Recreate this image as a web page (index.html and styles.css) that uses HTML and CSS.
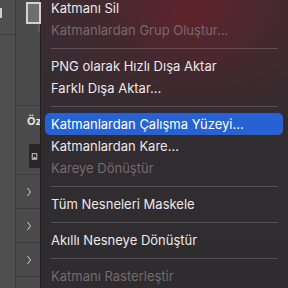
FILE: index.html
```html
<!DOCTYPE html>
<html lang="tr">
<head>
<meta charset="utf-8">
<title>Katman menüsü</title>
<link rel="stylesheet" href="styles.css">
</head>
<body>
<div class="screen">
  <aside class="col1">
    <div class="c1-top"><span class="tab-mark"></span></div>
  </aside>
  <aside class="col2">
    <div class="thumb-area"><span class="thumb"></span><span class="thumb-edge"></span></div>
    <div class="props-head">Öz</div>
    <div class="icon-row">
      <span class="img-icon">
        <svg width="12" height="14" viewBox="0 0 12 14"><rect x="3.5" y="4.5" width="5" height="6" fill="none" stroke="#d8d8d8" stroke-width="1"/><path d="M4 10 L6 7.5 L8 10 Z" fill="#d8d8d8"/></svg>
      </span>
    </div>
    <div class="row"><svg class="chev" width="6" height="10" viewBox="0 0 6 10"><polyline points="1.5,1 4.5,5 1.5,9" fill="none" stroke="#cfcfcf" stroke-width="1"/></svg></div>
    <div class="row"><svg class="chev" width="6" height="10" viewBox="0 0 6 10"><polyline points="1.5,1 4.5,5 1.5,9" fill="none" stroke="#cfcfcf" stroke-width="1"/></svg></div>
    <div class="row"><svg class="chev" width="6" height="10" viewBox="0 0 6 10"><polyline points="1.5,1 4.5,5 1.5,9" fill="none" stroke="#cfcfcf" stroke-width="1"/></svg></div>
  </aside>
  <nav class="menu">
    <div class="item">Katmanı Sil</div>
    <div class="item disabled">Katmanlardan Grup Oluştur...</div>
    <div class="sep"></div>
    <div class="item">PNG olarak Hızlı Dışa Aktar</div>
    <div class="item">Farklı Dışa Aktar...</div>
    <div class="sep"></div>
    <div class="item active">Katmanlardan Çalışma Yüzeyi...</div>
    <div class="item">Katmanlardan Kare...</div>
    <div class="item disabled">Kareye Dönüştür</div>
    <div class="sep"></div>
    <div class="item">Tüm Nesneleri Maskele</div>
    <div class="sep"></div>
    <div class="item">Akıllı Nesneye Dönüştür</div>
    <div class="sep"></div>
    <div class="item disabled">Katmanı Rasterleştir</div>
  </nav>
</div>
</body>
</html>
```
FILE: styles.css
```css
html, body {
  margin: 0;
  padding: 0;
  background: #4d4d4d;
}
.screen {
  width: 288px;
  height: 288px;
  overflow: hidden;
  display: flex;
  font-family: Inter, "Noto Sans", "Liberation Sans", sans-serif;
}
.col1 {
  width: 15px;
  flex: none;
  background: #4f4f4f;
  border-right: 1px solid #3a3a3a;
}
.c1-top {
  height: 34px;
  border-bottom: 1px solid #404040;
  position: relative;
}
.tab-mark {
  position: absolute;
  left: 0;
  top: 8px;
  width: 2px;
  height: 10px;
  background: #cfcfcf;
}
.col2 {
  width: 24px;
  flex: none;
  background: #4b4b4b;
  display: flex;
  flex-direction: column;
}
.thumb-area {
  height: 105px;
  border-bottom: 1px solid #3c3c3c;
  position: relative;
}
.thumb {
  position: absolute;
  left: 10px;
  top: 2px;
  width: 11px;
  height: 18px;
  border: 2px solid #d2d2d2;
  background: #6e6e6e;
}
.thumb-edge {
  position: absolute;
  left: 22px;
  top: 24px;
  width: 2px;
  height: 8px;
  background: #5a5a5a;
}
.props-head {
  height: 32px;
  padding-left: 11px;
  color: #e6e6e6;
  font-size: 11px;
  font-weight: 700;
  line-height: 30px;
  white-space: nowrap;
}
.icon-row {
  height: 37px;
  border-bottom: 1px solid #3c3c3c;
  display: flex;
  align-items: flex-start;
  padding-left: 13px;
  padding-top: 6px;
  box-sizing: border-box;
}
.img-icon {
  width: 11px;
  height: 24px;
  background: #262626;
  border-radius: 2px 0 0 2px;
  display: flex;
  align-items: center;
  justify-content: center;
}
.row {
  height: 33px;
  border-bottom: 1px solid #3c3c3c;
  display: flex;
  align-items: center;
  padding-left: 10px;
  flex: none;
}
.menu {
  flex: 1;
  margin-top: -3px;
  border-left: 1px solid #202020;
  padding: 0 5px 0 4px;
  background:
    radial-gradient(ellipse 70% 45% at 62% 4%, rgba(110, 32, 42, 0.75) 0%, rgba(80, 34, 42, 0.35) 55%, rgba(60, 40, 46, 0) 100%),
    linear-gradient(180deg, #3b2d32 0%, #322c30 45%, #2e2c2f 100%);
}
.item {
  height: 22px;
  line-height: 22px;
  padding-left: 6px;
  font-size: 13px;
  color: #ece8ea;
  white-space: nowrap;
  border-radius: 5px;
}
.item.disabled {
  color: #77696e;
}
.item.active {
  background: #2662d4;
  color: #ffffff;
}
.sep {
  height: 14px;
  display: flex;
  align-items: center;
  padding: 0 5px 0 6px;
}
.sep::before {
  content: "";
  flex: 1;
  height: 1px;
  background: rgba(255, 255, 255, 0.17);
}
```
